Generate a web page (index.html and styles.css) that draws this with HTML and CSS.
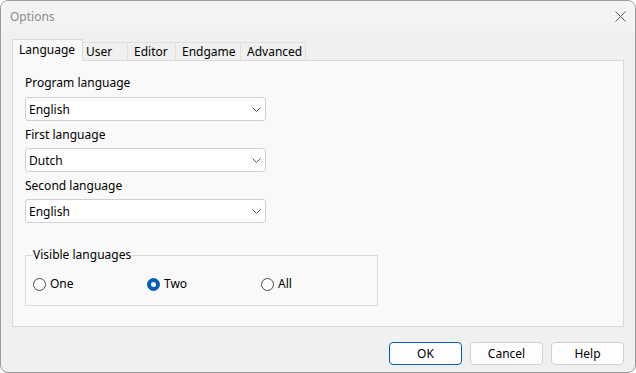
FILE: index.html
```html
<!DOCTYPE html>
<html>
<head>
<meta charset="utf-8">
<title>Options</title>
<link rel="stylesheet" href="styles.css">
</head>
<body>
<div class="window">
  <div class="titlebar">
    <span class="title">Options</span>
    <svg class="close" width="11" height="11" viewBox="0 0 11 11"><path d="M0.5 0.5 L10.5 10.5 M10.5 0.5 L0.5 10.5" stroke="#5f5f5f" stroke-width="1" fill="none"/></svg>
  </div>
  <div class="content">
    <div class="tabs">
      <div class="tab active t-lang">Language</div>
      <div class="tab t-user">User</div>
      <div class="tab t-editor">Editor</div>
      <div class="tab t-end">Endgame</div>
      <div class="tab t-adv">Advanced</div>
    </div>
    <div class="panel">
      <div class="label first">Program language</div>
      <div class="combo"><span>English</span><svg class="chev" width="9" height="5" viewBox="0 0 9 5"><path d="M0.5 0.5 L4.5 4.5 L8.5 0.5" stroke="#555" stroke-width="1" fill="none"/></svg></div>
      <div class="label">First language</div>
      <div class="combo"><span>Dutch</span><svg class="chev" width="9" height="5" viewBox="0 0 9 5"><path d="M0.5 0.5 L4.5 4.5 L8.5 0.5" stroke="#555" stroke-width="1" fill="none"/></svg></div>
      <div class="label">Second language</div>
      <div class="combo"><span>English</span><svg class="chev" width="9" height="5" viewBox="0 0 9 5"><path d="M0.5 0.5 L4.5 4.5 L8.5 0.5" stroke="#555" stroke-width="1" fill="none"/></svg></div>
      <fieldset class="group">
        <legend>Visible languages</legend>
        <div class="radios">
          <div class="radio"><span class="dot"></span>One</div>
          <div class="radio"><span class="dot checked"></span>Two</div>
          <div class="radio"><span class="dot"></span>All</div>
        </div>
      </fieldset>
    </div>
    <div class="buttons">
      <div class="btn default">OK</div>
      <div class="btn">Cancel</div>
      <div class="btn">Help</div>
    </div>
  </div>
</div>
</body>
</html>
```
FILE: styles.css
```css
* { box-sizing: border-box; }
html, body {
  margin: 0;
  padding: 0;
  background: #ffffff;
}
body {
  font-family: "Noto Sans", "Open Sans", sans-serif;
  font-size: 12px;
  color: #000;
}
.window {
  width: 636px;
  height: 373px;
  border: 1px solid #9a9a9a;
  border-radius: 8px;
  background: #f0f0f0;
  display: flex;
  flex-direction: column;
  overflow: hidden;
}
.titlebar {
  height: 30px;
  flex: none;
  background: #f3f3f3;
  display: flex;
  align-items: center;
  justify-content: space-between;
  padding: 0 9px 0 9px;
}
.title {
  color: #8c8c8c;
  font-size: 12px;
}
.close { display: block; }
.content {
  flex: 1;
  display: flex;
  flex-direction: column;
  padding: 8px 11px 7px 11px;
}
.tabs {
  display: flex;
  align-items: flex-end;
  height: 21px;
  flex: none;
  position: relative;
  z-index: 1;
}
.tab {
  height: 18px;
  line-height: 17px;
  border: 1px solid #e0e0e0;
  border-bottom: none;
  background: #f0f0f0;
  padding-left: 6px;
  margin-left: -1px;
  white-space: nowrap;
}
.tab.active {
  height: 22px;
  margin-bottom: -1px;
  margin-left: 0;
  line-height: 20px;
  background: #f9f9f9;
  border-color: #d9d9d9;
  position: relative;
  z-index: 2;
}
.t-lang { width: 71px; }
.t-user { width: 46px; padding-left: 3px; }
.t-editor { width: 49px; }
.t-end { width: 66px; }
.t-adv { width: 66px; }
.panel {
  flex: 1;
  background: #f9f9f9;
  border: 1px solid #d9d9d9;
  padding: 14px 12px 0 12px;
  display: flex;
  flex-direction: column;
  align-items: flex-start;
}
.label {
  height: 16px;
  line-height: 16px;
  margin-top: 6px;
  margin-bottom: 5px;
}
.label.first { margin-top: 0; margin-bottom: 6px; }
.combo {
  width: 241px;
  height: 24px;
  background: #fff;
  border: 1px solid #cfcfcf;
  border-radius: 3px;
  display: flex;
  align-items: center;
  justify-content: space-between;
  padding: 0 4px 0 3px;
}
.chev { display: block; }
.group {
  margin: 24px 0 0 0;
  width: 353px;
  border: 1px solid #dadada;
  padding: 13px 7px 13px 7px;
  min-inline-size: 0;
}
.group legend {
  padding: 0;
  line-height: 16px;
  height: 16px;
}
.radios {
  display: grid;
  grid-template-columns: 114px 114px 114px;
  height: 16px;
}
.radio {
  display: flex;
  align-items: center;
  line-height: 16px;
}
.dot {
  width: 13px;
  height: 13px;
  border: 1px solid #4d4d4d;
  border-radius: 50%;
  background: #fff;
  margin-right: 4px;
  flex: none;
  display: flex;
  align-items: center;
  justify-content: center;
}
.dot.checked {
  background: #005fb8;
  border-color: #005fb8;
}
.dot.checked::after {
  content: "";
  width: 5px;
  height: 5px;
  border-radius: 50%;
  background: #fff;
}
.buttons {
  flex: none;
  display: flex;
  justify-content: flex-end;
  gap: 8px;
  margin-top: 15px;
}
.btn {
  width: 73px;
  height: 23px;
  border: 1px solid #d0d0d0;
  border-radius: 4px;
  background: #fdfdfd;
  display: flex;
  align-items: center;
  justify-content: center;
}
.btn.default {
  border-color: #005fb8;
}
```
